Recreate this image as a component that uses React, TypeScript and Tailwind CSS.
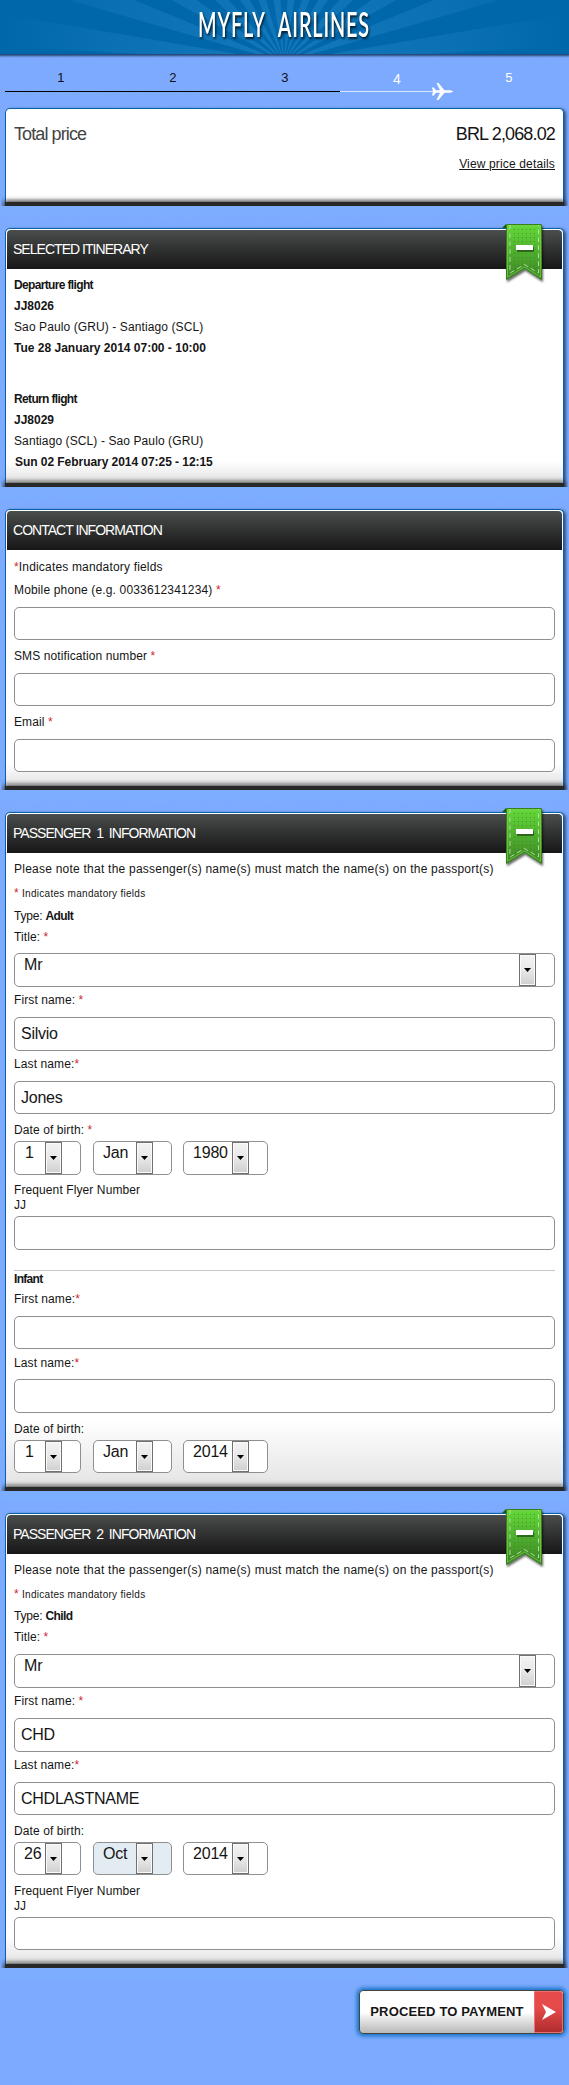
import React from "react";

function Star() {
  return <span className="text-[#d01f2e]">*</span>;
}

function Row({ h, className = "", children }: { h: number; className?: string; children?: React.ReactNode }) {
  return (
    <div className={"flex shrink-0 items-center whitespace-pre " + className} style={{ height: h }}>
      {children}
    </div>
  );
}

function Gap({ h }: { h: number }) {
  return <div className="shrink-0" style={{ height: h }} />;
}

function CardGap() {
  return (
    <div className="relative h-[22px] shrink-0 px-px">
      <div className="h-[14px] bg-linear-to-b from-[#7caeff] from-50% to-[#7caeff]/0" />
    </div>
  );
}

function Field({ h = 33, value = "" }: { h?: number; value?: string }) {
  return (
    <div
      className="flex shrink-0 items-center rounded-[5px] border border-[#8f8f8f] bg-white pl-[6px] text-[16px] tracking-[-0.25px]"
      style={{ height: h }}
    >
      {value}
    </div>
  );
}

function Select({ w, h = 33, value, arrow, pad = 9, tint = false }: { w: number; h?: number; value: string; arrow: number; pad?: number; tint?: boolean }) {
  return (
    <div
      className={"relative shrink-0 rounded-[5px] border border-[#8f8f8f] text-[16px] leading-[22px] tracking-[-0.2px] " + (tint ? "bg-[#e3ecf3]" : "bg-white")}
      style={{ width: w, height: h, paddingLeft: pad }}
    >
      {value}
      <span
        className="absolute top-0 bottom-0 flex w-[17px] items-center justify-center border border-[#707070] bg-linear-to-b from-[#f3f3f3] from-0% via-[#e8e8e8] via-50% to-[#cfcfcf] to-100% shadow-[inset_0_0_0_1px_#fafafa]"
        style={{ left: arrow }}
      >
        <svg width="7" height="4" viewBox="0 0 7 4">
          <path d="M0 0h7L3.5 4z" fill="#000" />
        </svg>
      </span>
    </div>
  );
}

function Ribbon() {
  return (
    <svg className="absolute top-[-5px] right-[16px]" width="46" height="64" viewBox="0 0 46 64">
      <defs>
        <linearGradient id="ribbonFill" x1="0" y1="0" x2="0" y2="1">
          <stop offset="0" stopColor="#64d838" />
          <stop offset="1" stopColor="#3c8426" />
        </linearGradient>
        <pattern id="ribbonDots" width="4" height="4" patternUnits="userSpaceOnUse">
          <rect x="1" y="1" width="1" height="1" fill="#2b7a1c" opacity="0.6" />
        </pattern>
        <filter id="ribbonShade" x="-20%" y="-20%" width="150%" height="150%">
          <feDropShadow dx="1" dy="2" stdDeviation="1.2" floodColor="#000" floodOpacity="0.6" />
        </filter>
      </defs>
      <path d="M1 4 5 0v4z" fill="#1d5a12" />
      <g filter="url(#ribbonShade)">
        <path d="M5.500 .5h35V55.500L23.500 44.500 5.500 55.500z" fill="url(#ribbonFill)" stroke="#37801f" />
      </g>
      <path d="M6.500 2v51L23.500 43 39.500 53V2z" fill="url(#ribbonDots)" stroke="#7ccc52" strokeOpacity="0.7" />
      <path d="M9 1v48L23.500 40.500 37.500 49V1" fill="none" stroke="#c5efae" strokeWidth="1" strokeDasharray="5 3" strokeOpacity="0.8" />
      <rect x="16" y="23" width="17" height="5" fill="#1d4a12" opacity="0.7" />
      <rect x="15" y="21" width="17" height="5" fill="#fff" />
    </svg>
  );
}

function Card({ h, title, ribbon = false, fade = 20, children }: { h: number; title?: string; ribbon?: boolean; fade?: number; children: React.ReactNode }) {
  return (
    <section
      className="relative mx-[5px] flex shrink-0 flex-col rounded-t-[5px] border border-b-0 border-[#0563ab] bg-white shadow-[2px_1px_3px_rgba(20,40,80,0.7)]"
      style={{ height: h }}
    >
      <div
        className="absolute inset-x-0 bottom-[6px] bg-linear-to-b from-white to-[#e4e4e4]"
        style={{ height: fade }}
      />
      <div className="absolute inset-x-[-5px] bottom-0 h-[12px] overflow-hidden">
        <div className="absolute inset-x-[4px] top-[8px] h-[9px] bg-[#282828] shadow-[0_0_5px_1px_#222]" />
      </div>
      {title && (
        <div className="mx-px mt-px flex h-[39px] shrink-0 items-center rounded-t-[4px] bg-linear-to-b from-[#4a4e4c] to-[#171717] pl-[6px] text-[14px] tracking-[-0.97px] whitespace-pre text-white">
          {title}
        </div>
      )}
      {ribbon && <Ribbon />}
      <div className="relative flex flex-col px-[8px]">{children}</div>
    </section>
  );
}

function Dates({ h, day, month, year, tint = false }: { h: number; day: string; month: string; year: string; tint?: boolean }) {
  return (
    <div className="flex shrink-0">
      <Select w={67} h={h} value={day} arrow={30} pad={day.length > 1 ? 9 : 10} />
      <div className="ml-[12px]">
        <Select w={79} h={h} value={month} arrow={42} tint={tint} />
      </div>
      <div className="ml-[11px]">
        <Select w={85} h={h} value={year} arrow={48} pad={9} />
      </div>
    </div>
  );
}

function Logo() {
  const rays: string[] = [];
  for (let i = 0; i < 14; i++) {
    const a = (Math.PI * (i + 0.25)) / 14;
    const b = (Math.PI * (i + 0.75)) / 14;
    rays.push(`M284 62L${284 + 600 * Math.cos(a)} ${62 - 600 * Math.sin(a)}L${284 + 600 * Math.cos(b)} ${62 - 600 * Math.sin(b)}z`);
  }
  return (
    <header className="relative z-10 h-[54px] shrink-0 bg-[#0067ab] shadow-[0_1px_2px_1px_rgba(20,50,90,0.85)]">
      <svg className="block" width="569" height="54" viewBox="0 0 569 54">
        <defs>
          <radialGradient id="rayFill" gradientUnits="userSpaceOnUse" cx="284" cy="62" r="285">
            <stop offset="0" stopColor="#1478ba" />
            <stop offset="0.6" stopColor="#0b71b4" />
            <stop offset="1" stopColor="#0067ab" />
          </radialGradient>
        </defs>
        <path d={rays.join("")} fill="url(#rayFill)" />
        <text
          x="198"
          y="37"
          fontFamily="Lato, sans-serif"
          fontSize="35"
          fontWeight="600"
          fill="#fff"
          textLength="172"
          lengthAdjust="spacingAndGlyphs"
          style={{ letterSpacing: "1.5px", wordSpacing: "14px", filter: "drop-shadow(1px 2px 1px rgba(0,0,0,.75))" }}
        >
          MYFLY AIRLINES
        </text>
      </svg>
    </header>
  );
}

function Steps() {
  return (
    <nav className="relative mx-[5px] h-[54px] shrink-0">
      <div className="flex pt-[15px] text-[13px] leading-[18px]">
        {[1, 2, 3, 4, 5].map((n) => (
          <span key={n} className={"w-[112px] shrink-0 text-center " + (n > 3 ? "text-white" : "text-[#111]") + (n === 4 ? " h-[18px] pt-px text-[14px]" : "")}>
            {n}
          </span>
        ))}
      </div>
      <div className="mt-[4px] flex h-px">
        <div className="w-[335px] bg-black" />
        <div className="w-[93px] bg-white/70" />
      </div>
      <svg className="absolute top-[28.500px] left-[427px]" width="21" height="17" viewBox="0 0 21 17">
        <path d="M0 4.500h1.800L4 7.200h4L4.500 0h2l6 7.200h5.500q2.800 .6 3 1.300q-.2 .7-3 1.300h-5.500l-6 7.200h-2L8 9.800H4L1.800 12.500H0L1 8.500z" fill="#fff" />
      </svg>
    </nav>
  );
}

function Passenger({ children, type, title, h, first, last, second = false }: { children: React.ReactNode; type: string; title: string; h: number; first: string; last: string; second?: boolean }) {
  return (
    <Card h={h} title={title} ribbon fade={second ? 26 : 65}>
      <Gap h={6} />
      <Row h={20}><span className="tracking-[0.235px]">Please note that the passenger(s) name(s) must match the name(s) on the passport(s)</span></Row>
      <Gap h={4} />
      <Row h={20} className="text-[10px] tracking-[0.28px]"><span className="text-[12px]"><Star /></span> Indicates mandatory fields</Row>
      <Gap h={second ? 2 : 3} />
      <Row h={20} className="tracking-[-0.2px]">Type: <b className="tracking-[-0.6px]">{type}</b></Row>
      <Gap h={1} />
      <Row h={20}>Title: <Star /></Row>
      <Gap h={second ? 7 : 6} />
      <Select w={541} h={34} value="Mr" arrow={504} />
      <Gap h={3} />
      <Row h={20}>First name: <Star /></Row>
      <Gap h={7} />
      <Field h={34} value={first} />
      <Gap h={3} />
      <Row h={20}>Last name:<Star /></Row>
      <Gap h={7} />
      <Field value={last} />
      {children}
    </Card>
  );
}

export default function App() {
  return (
    <div
      className="relative isolate flex h-[2085px] w-[569px] flex-col overflow-hidden bg-[#7caaff] text-[12px] tracking-[0.1px] text-[#151515]"
      style={{ fontFamily: '"Liberation Sans", Arial, sans-serif' }}
    >
      <svg className="absolute inset-0 -z-10" width="569" height="2085">
        <filter id="paper" x="0" y="0" width="100%" height="100%">
          <feTurbulence type="fractalNoise" baseFrequency="0.35" numOctaves="2" seed="4" />
          <feColorMatrix values="0 0 0 0 0.3  0 0 0 0 0.45  0 0 0 0 0.8  0.5 0 0 0 -0.14" />
        </filter>
        <rect width="569" height="2085" filter="url(#paper)" opacity="0.5" />
      </svg>
      <Logo />
      <Steps />

      <Card h={98} fade={1}>
        <div className="flex h-[50px] items-center justify-between text-[18px]">
          <span className="tracking-[-0.9px] text-[#444]">Total price</span>
          <span className="tracking-[-0.85px]">BRL 2,068.02</span>
        </div>
        <Row h={9} className="justify-end text-[12px] tracking-[0.15px] underline">View price details</Row>
      </Card>

      <CardGap />
      <Card h={259} title="SELECTED ITINERARY" ribbon>
        <Gap h={5} />
        <Row h={21} className="font-bold tracking-[-0.65px]">Departure flight</Row>
        <Row h={21} className="font-bold tracking-[0px]">JJ8026</Row>
        <Row h={21}>Sao Paulo (GRU) - Santiago (SCL)</Row>
        <Row h={21} className="font-bold tracking-[0px]">Tue 28 January 2014 07:00 - 10:00</Row>
        <Gap h={30} />
        <Row h={21} className="font-bold tracking-[-0.65px]">Return flight</Row>
        <Row h={21} className="font-bold tracking-[0px]">JJ8029</Row>
        <Row h={21}>Santiago (SCL) - Sao Paulo (GRU)</Row>
        <Row h={21} className="pl-px font-bold tracking-[-0.050px]">Sun 02 February 2014 07:25 - 12:15</Row>
      </Card>

      <CardGap />
      <Card h={281} title="CONTACT INFORMATION">
        <Gap h={7} />
        <Row h={20} className="tracking-[0.17px]"><Star />Indicates mandatory fields</Row>
        <Gap h={3} />
        <Row h={20} className="tracking-[0.15px]">Mobile phone (e.g. 0033612341234) <Star /></Row>
        <Gap h={7} />
        <Field />
        <Gap h={6} />
        <Row h={20}>SMS notification number <Star /></Row>
        <Gap h={7} />
        <Field />
        <Gap h={6} />
        <Row h={20}>Email <Star /></Row>
        <Gap h={7} />
        <Field />
      </Card>

      <CardGap />
      <Passenger h={679} title="PASSENGER  1  INFORMATION" type="Adult" first="Silvio" last="Jones">
        <Gap h={6} />
        <Row h={20}>Date of birth: <Star /></Row>
        <Gap h={1} />
        <Dates h={34} day="1" month="Jan" year="1980" />
        <Gap h={7} />
        <Row h={15}>Frequent Flyer Number</Row>
        <Row h={15}>JJ</Row>
        <Gap h={4} />
        <Field h={34} />
        <div className="mt-[20px] h-px shrink-0 bg-[#c8c8c8]" />
        <Row h={15} className="font-bold tracking-[-0.7px]">Infant</Row>
        <Gap h={3} />
        <Row h={20}>First name:<Star /></Row>
        <Gap h={7} />
        <Field />
        <Gap h={4} />
        <Row h={20}>Last name:<Star /></Row>
        <Gap h={6} />
        <Field h={34} />
        <Gap h={6} />
        <Row h={20}>Date of birth:</Row>
        <Gap h={1} />
        <Dates h={33} day="1" month="Jan" year="2014" />
      </Passenger>

      <CardGap />
      <Passenger second h={455} title="PASSENGER  2  INFORMATION" type="Child" first="CHD" last="CHDLASTNAME">
        <Gap h={6} />
        <Row h={20}>Date of birth:</Row>
        <Gap h={1} />
        <Dates h={33} day="26" month="Oct" year="2014" tint />
        <Gap h={8} />
        <Row h={15}>Frequent Flyer Number</Row>
        <Row h={15}>JJ</Row>
        <Gap h={4} />
        <Field />
      </Passenger>

      <CardGap />
      <div className="mr-[5px] flex h-[44px] w-[205px] shrink-0 self-end rounded-[4px] border border-[#444] bg-linear-to-b from-white from-50% to-[#b8b8b8] shadow-[0_0_4px_2px_#0d6fc0]">
        <span className="flex w-[174px] items-center justify-center text-[13px] font-bold tracking-[0.150px] whitespace-pre">PROCEED TO PAYMENT</span>
        <span className="flex flex-1 items-center justify-center rounded-r-[3px] border border-[#e87070] bg-linear-to-b from-[#e64a4a] from-40% to-[#b02c2c]">
          <svg width="14" height="16" viewBox="0 0 14 16">
            <path d="M0 0 14 8 0 16 4 8z" fill="#fff" />
          </svg>
        </span>
      </div>
    </div>
  );
}
